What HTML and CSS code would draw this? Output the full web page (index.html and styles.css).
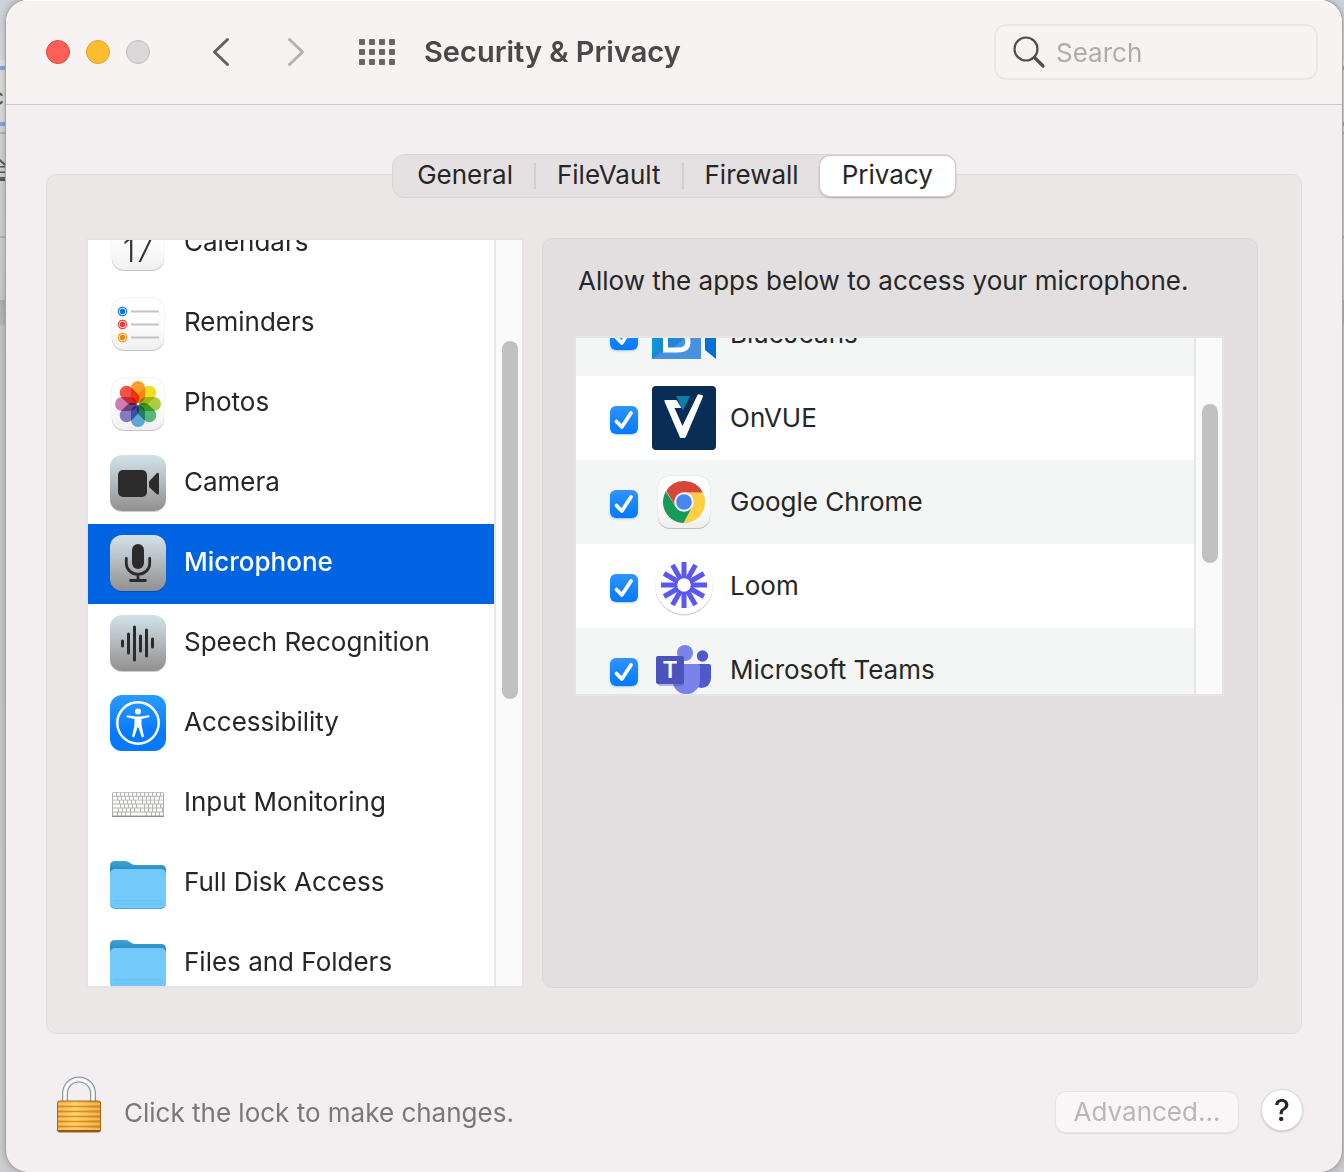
FILE: index.html
```html
<!DOCTYPE html>
<html lang="en">
<head>
  <meta charset="UTF-8">
  <meta name="viewport" content="width=device-width, initial-scale=1.0">
  <title>Security &amp; Privacy</title>
  <link rel="stylesheet" href="styles.css">
</head>
<body>
  <!-- Page behind the window -->
  <div class="behind" aria-hidden="true">
    <span class="behind-text">cl</span>
    <span class="behind-text behind-link">全</span>
  </div>

  <div class="window">
    <!-- Toolbar -->
    <header class="toolbar">
      <div class="lights">
        <button class="light light-close" aria-label="Close"></button>
        <button class="light light-min" aria-label="Minimize"></button>
        <button class="light" aria-label="Zoom" disabled></button>
      </div>
      <div class="nav-buttons">
        <button class="icon-button" aria-label="Back">
          <svg width="18" height="30" viewBox="0 0 18 30"><path d="M15.500 2.500 2.500 15l13 12.500" fill="none" stroke="#636061" stroke-width="3" stroke-linecap="round" stroke-linejoin="round"/></svg>
        </button>
        <button class="icon-button" aria-label="Forward" disabled>
          <svg width="18" height="30" viewBox="0 0 18 30"><path d="M2.500 2.500 15.500 15l-13 12.500" fill="none" stroke="#b5b1b2" stroke-width="3" stroke-linecap="round" stroke-linejoin="round"/></svg>
        </button>
      </div>
      <button class="icon-button" aria-label="Show All">
        <svg width="36" height="26" viewBox="0 0 36 26" fill="#696667">
          <rect x="0" y="0" width="6" height="6" rx="1"/><rect x="10" y="0" width="6" height="6" rx="1"/><rect x="20" y="0" width="6" height="6" rx="1"/><rect x="30" y="0" width="6" height="6" rx="1"/>
          <rect x="0" y="10" width="6" height="6" rx="1"/><rect x="10" y="10" width="6" height="6" rx="1"/><rect x="20" y="10" width="6" height="6" rx="1"/><rect x="30" y="10" width="6" height="6" rx="1"/>
          <rect x="0" y="20" width="6" height="6" rx="1"/><rect x="10" y="20" width="6" height="6" rx="1"/><rect x="20" y="20" width="6" height="6" rx="1"/><rect x="30" y="20" width="6" height="6" rx="1"/>
        </svg>
      </button>
      <h1>Security &amp; Privacy</h1>
      <label class="search">
        <svg width="34" height="34" viewBox="0 0 34 34" fill="none" stroke="#504d4e" stroke-linecap="round"><circle cx="14" cy="14" r="11.500" stroke-width="2.200"/><path d="M22.500 22.500 31 31" stroke-width="3.200"/></svg>
        <input type="search" placeholder="Search" aria-label="Search">
      </label>
    </header>

    <main>
      <!-- Tabs -->
      <nav class="tabs">
        <button>General</button>
        <button>FileVault</button>
        <button>Firewall</button>
        <button class="active">Privacy</button>
      </nav>

      <div class="panel">
        <!-- Services -->
        <div class="scroller services">
          <ul>
            <li><a href="#">
              <svg width="56" height="56" viewBox="0 -1 56 56"><use href="#tile"/><text x="28" y="46" class="cal-day">17</text></svg>
              Calendars
            </a></li>
            <li><a href="#">
              <svg width="56" height="56" viewBox="0 -1 56 56"><use href="#tile"/>
                <g stroke="#c2c3c8" stroke-width="1.800"><path d="M21 15.500h28M21 28.500h28M21 41.500h28"/></g>
                <g fill="#fff" stroke-width="1.200"><circle cx="12.500" cy="15.500" r="4.200" stroke="#1a7df0"/><circle cx="12.500" cy="28.500" r="4.200" stroke="#f0443e"/><circle cx="12.500" cy="41.500" r="4.200" stroke="#eb9a1c"/></g>
                <circle cx="12.500" cy="15.500" r="2.800" fill="#0b72ea"/><circle cx="12.500" cy="28.500" r="2.800" fill="#ee3a34"/><circle cx="12.500" cy="41.500" r="2.800" fill="#e28c0c"/>
              </svg>
              Reminders
            </a></li>
            <li><a href="#">
              <svg width="56" height="56" viewBox="0 -1 56 56"><use href="#tile"/>
                <g class="petals" transform="translate(28 28)">
                  <rect x="-7" y="-23" width="14" height="22" rx="7" fill="#fb9a1e"/>
                  <rect x="-7" y="-23" width="14" height="22" rx="7" fill="#f4dc16" transform="rotate(45)"/>
                  <rect x="-7" y="-23" width="14" height="22" rx="7" fill="#a6ce39" transform="rotate(90)"/>
                  <rect x="-7" y="-23" width="14" height="22" rx="7" fill="#4fba74" transform="rotate(135)"/>
                  <rect x="-7" y="-23" width="14" height="22" rx="7" fill="#5aa9e0" transform="rotate(180)"/>
                  <rect x="-7" y="-23" width="14" height="22" rx="7" fill="#8377c0" transform="rotate(225)"/>
                  <rect x="-7" y="-23" width="14" height="22" rx="7" fill="#cf78b2" transform="rotate(270)"/>
                  <rect x="-7" y="-23" width="14" height="22" rx="7" fill="#f8463c" transform="rotate(315)"/>
                </g>
              </svg>
              Photos
            </a></li>
            <li><a href="#">
              <svg width="56" height="56" viewBox="0 0 56 56"><use href="#gray-tile"/>
                <rect x="8" y="15" width="29" height="27" rx="5" fill="#2b2b2b"/><path d="M39 26.500 46.500 18.500Q49 16.500 49 19.500V38Q49 41 46.500 39L39 32Z" fill="#2b2b2b"/>
              </svg>
              Camera
            </a></li>
            <li class="selected"><a href="#">
              <svg width="56" height="56" viewBox="0 0 56 56"><use href="#gray-tile"/>
                <rect x="22" y="9" width="12" height="25" rx="6" fill="#2b2b2b"/><path d="M16.300 23.500v5a11.700 10.800 0 0 0 23.400 0v-5M28 40v5M20.500 45.500h15" fill="none" stroke="#2b2b2b" stroke-width="2.800" stroke-linecap="round"/>
              </svg>
              Microphone
            </a></li>
            <li><a href="#">
              <svg width="56" height="56" viewBox="0 0 56 56"><use href="#gray-tile"/>
                <path d="M12.500 26v5M18.500 19v19M24.500 12v33M30.500 21v15M36.500 15v26M42.500 24v8" stroke="#2b2b2b" stroke-width="3" stroke-linecap="round"/>
              </svg>
              Speech Recognition
            </a></li>
            <li><a href="#">
              <svg width="56" height="56" viewBox="0 0 56 56"><rect width="56" height="56" rx="12" fill="url(#blue)"/>
                <circle cx="28" cy="28" r="20.700" fill="none" stroke="#fff" stroke-width="2.500"/><circle cx="28" cy="16.500" r="3" fill="#fff"/>
                <path d="M17 20.200 25.500 21.500h5L39 20.200q1.200 1.400 0 2L31.500 24v6l2.500 11.500q-1.300 1.300-2.400.2L28.500 32.500h-1L24.400 41.700q-1.100 1.100-2.400-.2L24.500 30v-6L17 22.200q-1.200-.6 0-2Z" fill="#fff"/>
              </svg>
              Accessibility
            </a></li>
            <li><a href="#">
              <svg width="56" height="56" viewBox="0 -1 56 56">
                <rect x="2" y="16" width="52" height="25" rx="1.500" fill="#b2b2b0"/><rect x="2" y="39.500" width="52" height="1.500" fill="#8f8f8f"/>
                <g stroke="#fafafa" stroke-width="3">
                  <path d="M3 18.300h50" stroke-dasharray="3 1"/>
                  <path d="M3 22.200h50" stroke-dasharray="4 1 3 1 3 1 3 1 3 1"/>
                  <path d="M3 26.100h50" stroke-dasharray="6 1 3 1 3 1 3 1 3 1"/>
                  <path d="M3 30h50" stroke-dasharray="7 1 3 1 3 1 3 1 3 1"/>
                  <path d="M3 34h50" stroke-dasharray="5 1 3 1 3 1 3 1 3 1"/>
                  <path d="M3 37.900h50" stroke-dasharray="4 1 3 1 3 1 4 1 15 1 4 1 3 1 3 1 3 1"/>
                </g>
              </svg>
              Input Monitoring
            </a></li>
            <li><a href="#">
              <svg width="56" height="56" viewBox="0 -1 56 56"><use href="#folder"/></svg>
              Full Disk Access
            </a></li>
            <li><a href="#">
              <svg width="56" height="56" viewBox="0 0 56 56"><use href="#folder"/></svg>
              Files and Folders
            </a></li>
          </ul>
          <div class="scrollbar"><div class="thumb"></div></div>
        </div>

        <!-- Apps -->
        <section class="pane">
          <p>Allow the apps below to access your microphone.</p>
          <div class="scroller apps">
            <ul>
              <li><label>
                <input type="checkbox" checked>
                <svg width="64" height="64" viewBox="0 0 64 64">
                  <path d="M0 8h49v49H0Z" fill="#1688dc"/><path d="M0 57 14 43V8H0Z" fill="#0799da"/><path d="M0 57 49 22v35Z" fill="#4692de"/><path d="M0 57 11 46h10L49 22V8H18Z" fill="#2185d8"/>
                  <path d="M53 30 64 20v37L53 48Z" fill="#0571d3"/>
                  <path d="M13.500 18H25q9 0 9 7 0 5-5 6.500 7 1.500 7 8 0 8.500-10 8.500H13.500Z" fill="none" stroke="#fff" stroke-width="5"/><path d="M14 31.500h15" stroke="#fff" stroke-width="5"/>
                </svg>
                BlueJeans
              </label></li>
              <li><label>
                <input type="checkbox" checked>
                <svg width="64" height="64" viewBox="0 0 64 64">
                  <rect width="64" height="64" rx="4" fill="#0a2d56"/><path d="M24 10h14L31 24.500Z" fill="#0a7fa8"/>
                  <path d="M13 14h11.500L29.500 22H22.500L30.500 40 45.500 9q.5-1 2-.5l2.500.5q1.500.5.8 2L34 50.500q-.8 1.500-2 1.500h-3q-1 0-1.500-1.500L12.500 15.500Q12 14 13 14Z" fill="#fff"/>
                </svg>
                OnVUE
              </label></li>
              <li><label>
                <input type="checkbox" checked>
                <svg width="64" height="64" viewBox="0 0 64 64">
                  <use href="#tile" x="4" y="4"/>
                  <path d="M32 22.500H50.800A21 21 0 0 1 31.500 53L40.200 36.800Z" fill="#fdcf42"/>
                  <path d="M23.800 36.800 13.820 21.500A21 21 0 0 0 31.500 53L40.200 36.800Z" fill="#159b57"/>
                  <path d="M23.800 36.800 14.200 21A21 21 0 0 1 50.800 22.500H32Z" fill="#d8463a"/>
                  <circle cx="32" cy="32" r="9.800" fill="#f4f4f4"/><circle cx="32" cy="32" r="7.800" fill="#4a86f0"/>
                </svg>
                Google Chrome
              </label></li>
              <li><label>
                <input type="checkbox" checked>
                <svg width="64" height="64" viewBox="0 0 64 64">
                  <circle cx="32" cy="32" r="29.500" fill="#f2f2f2"/><circle cx="32" cy="33" r="28.500" fill="#d3d3d3"/><circle cx="32" cy="31.500" r="28.800" fill="#fff"/>
                  <g stroke="#5b57f2" stroke-width="5">
                    <path d="M32 8v46M9 31h46"/>
                    <path d="M32 8v46M9 31h46" transform="rotate(30 32 31)"/>
                    <path d="M32 8v46M9 31h46" transform="rotate(60 32 31)"/>
                  </g>
                  <circle cx="32" cy="31" r="9" fill="#5b57f2"/><circle cx="32" cy="31" r="6.800" fill="#fff"/>
                </svg>
                Loom
              </label></li>
              <li><label>
                <input type="checkbox" checked>
                <svg width="64" height="64" viewBox="0 0 64 64">
                  <circle cx="50.500" cy="18" r="5.700" fill="#5059c9"/><path d="M40 26h17q2 0 2 2v12.500a9.500 9.500 0 0 1-19 0Z" fill="#5059c9"/>
                  <circle cx="33" cy="15" r="8" fill="#7b83eb"/><path d="M20 26h26q2 0 2 2v14.500a13.700 13.700 0 0 1-27.400 0Z" fill="#7b83eb"/>
                  <rect x="6" y="20" width="26" height="28" rx="2" fill="#3a419e" opacity=".35"/><rect x="4" y="18" width="28" height="28" rx="2" fill="#4b53bc"/>
                  <text x="18" y="40" class="teams-letter">T</text>
                </svg>
                Microsoft Teams
              </label></li>
            </ul>
            <div class="scrollbar"><div class="thumb"></div></div>
          </div>
        </section>
      </div>
    </main>

    <!-- Bottom bar -->
    <footer>
      <svg width="46" height="58" viewBox="0 0 46 58">
        <path d="M9 28V17.500a14 14 0 0 1 28 0V28" fill="none" stroke="#8b949b" stroke-width="6"/>
        <path d="M9 28V17.500a14 14 0 0 1 28 0V28" fill="none" stroke="#dfe6ea" stroke-width="4"/>
        <path d="M9 27V17.500a14 14 0 0 1 28 0V27" fill="none" stroke="#fff" stroke-width="1.500"/>
        <rect x="1.500" y="25" width="43" height="31" rx="2" fill="url(#gold)" stroke="#a8661c"/>
        <path d="M2 30.500h42M2 35.500h42M2 40.500h42M2 45.500h42M2 50.500h42" stroke="#d88b22"/>
        <path d="M2 28h42M2 33h42M2 38h42M2 43h42M2 48h42M2 53h42" stroke="#ffdc87"/>
        <path d="M2 55h42" stroke="#9c5415" stroke-width="2"/>
      </svg>
      <span class="lock-text">Click the lock to make changes.</span>
      <button class="advanced" disabled>Advanced...</button>
      <button class="help">?</button>
    </footer>
  </div>

  <!-- Shared shapes -->
  <svg class="defs" aria-hidden="true">
    <defs>
      <linearGradient id="white" x2="0" y2="1"><stop offset="0" stop-color="#fff"/><stop offset=".5" stop-color="#fdfdfd"/><stop offset="1" stop-color="#f1f0ef"/></linearGradient>
      <linearGradient id="gray" x2="0" y2="1"><stop offset="0" stop-color="#d3e3ea"/><stop offset="1" stop-color="#929090"/></linearGradient>
      <linearGradient id="blue" x2="0" y2="1"><stop offset="0" stop-color="#2b9bff"/><stop offset=".7" stop-color="#0579ff"/><stop offset="1" stop-color="#0579ff"/></linearGradient>
      <linearGradient id="gold"><stop offset="0" stop-color="#e99c31"/><stop offset=".4" stop-color="#fdc65c"/><stop offset="1" stop-color="#dd8c27"/></linearGradient>
      <linearGradient id="folder-back" x2="0" y2="1"><stop offset="0" stop-color="#3fa2d8"/><stop offset="1" stop-color="#1a80bb"/></linearGradient>
      <g id="tile">
        <rect x="2" y="3" width="52" height="52" rx="12" fill="#000" opacity=".2"/>
        <rect x="1.500" y="1.500" width="53" height="53" rx="12" fill="#000" opacity=".07"/>
        <rect x="2" y="2" width="52" height="52" rx="12" fill="url(#white)"/>
      </g>
      <g id="gray-tile">
        <rect x="0" y="1" width="56" height="56" rx="12" fill="#000" opacity=".2"/>
        <rect width="56" height="56" rx="12" fill="url(#gray)"/>
      </g>
      <g id="folder">
        <path d="M0 20V10q0-5 5-5h10q3 0 5 2t6 2h25q5 0 5 5v6Z" fill="url(#folder-back)"/>
        <rect x="0" y="13.500" width="56" height="39.500" rx="5" fill="#4ea5d6"/>
        <rect x="0" y="13" width="56" height="39" rx="5" fill="#73cafa"/>
        <path d="M3 45h50M3 48h50" stroke="#66bdf0"/>
      </g>
    </defs>
  </svg>
</body>
</html>
```
FILE: styles.css
```css
* {
  margin: 0;
  padding: 0;
  box-sizing: border-box;
}

body {
  font-family: Inter, "Liberation Sans", sans-serif;
  font-size: 26px;
  color: #262626;
  height: 100vh;
  min-height: 800px;
  padding: 0 2px 0 6px;
  position: relative;
  background: linear-gradient(
    #cfd2d9 0, #d9dade 60px, #e2e3e6 60px, #e2e3e6 66px,
    #8ba4dc 66px, #8ba4dc 70px, #dcdcdc 70px, #dcdcdc 122px,
    #8ba4dc 122px, #8ba4dc 126px, #d6d6d6 126px, #d6d6d6 132px,
    #b4b4b6 132px, #b4b4b6 134px, #d4d4d4 134px, #cfcfcf 236px,
    #b4b4b8 236px, #b4b4b8 238px, #cfcfcf 238px, #cccccc 300px,
    #b2b2b4 300px, #bababc 324px, #c8c8ca 326px, #cdcdd0 100%);
}

button, input {
  font: inherit;
  color: inherit;
  border: none;
  background: none;
}

ul {
  list-style: none;
}

svg {
  display: block;
  flex: none;
}

.defs {
  position: absolute;
  width: 0;
  height: 0;
}

/* Page behind the window */
.behind {
  position: absolute;
  left: 0;
  top: 82px;
  width: 10px;
  display: flex;
  flex-direction: column;
  align-items: flex-end;
  gap: 40px;
  font-size: 24px;
  line-height: 30px;
  color: #55565a;
}

.behind-link {
  font-family: "Noto Sans CJK SC", sans-serif;
  text-decoration: underline;
}

/* Window */
.window {
  position: relative;
  height: 100%;
  display: flex;
  flex-direction: column;
  background-color: #f3eff0;
  border-radius: 22px;
  box-shadow: 0 0 0 1px #a5a4a6, 0 0 8px rgba(0, 0, 0, 0.3);
  overflow: hidden;
}

/* Toolbar */
.toolbar {
  flex: none;
  height: 105px;
  display: flex;
  align-items: center;
  padding: 0 24px 2px 40px;
  background-color: #f8f3f3;
  border-top: 1px solid #fff;
  border-bottom: 1px solid #cbc7c7;
}

.lights {
  display: flex;
  gap: 16px;
}

.light {
  width: 24px;
  height: 24px;
  border-radius: 50%;
  background-color: #dcd8d9;
  border: 1px solid #c1bdbe;
}

.light-close {
  background-color: #ff5f57;
  border-color: #e2463f;
}

.light-min {
  background-color: #febc2e;
  border-color: #e0a028;
}

.nav-buttons {
  display: flex;
  gap: 57px;
  margin: 0 54px 0 62px;
}

.toolbar h1 {
  margin-left: 29px;
  font-size: 29px;
  font-weight: 600;
  color: #4a4849;
}

.search {
  margin-left: auto;
  width: 324px;
  height: 56px;
  display: flex;
  align-items: center;
  gap: 10px;
  padding: 0 16px;
  border: 2px solid #eae6e6;
  border-radius: 12px;
}

.search input {
  width: 100%;
  padding-top: 2px;
  outline: none;
}

.search input::placeholder {
  color: #b0acad;
}

/* Tabs */
main {
  flex: 1;
  min-height: 0;
  display: flex;
  flex-direction: column;
  padding: 49px 40px 0;
}

.tabs {
  position: relative;
  z-index: 1;
  flex: none;
  align-self: center;
  display: flex;
  align-items: center;
  height: 44px;
  margin-bottom: -24px;
  background-color: #e5e1e2;
  border: 1px solid #dad6d7;
  border-radius: 12px;
}

.tabs button {
  height: 26px;
  line-height: 24px;
  padding: 0 21px 2px;
  border-left: 2px solid #d2cecf;
}

.tabs button:first-child {
  padding-left: 24px;
  border-left: none;
}

.tabs .active {
  height: 40px;
  padding: 0 22px 2px;
  border-left: none;
  border-radius: 10px;
  background-color: #fff;
  box-shadow: 0 0 0 1px #d0cccd, 0 1px 3px rgba(0, 0, 0, 0.4);
}

/* Panel */
.panel {
  flex: 1;
  min-height: 0;
  display: flex;
  gap: 18px;
  padding: 63px 43px 45px 39px;
  background-color: #ebe7e7;
  border: 1px solid #e0dcdc;
  border-radius: 10px;
}

.scroller {
  display: flex;
  overflow: hidden;
  background-color: #fff;
  border: 2px solid #e5e4e5;
}

.scroller ul {
  flex: 1;
}

.scrollbar {
  width: 28px;
  padding: 0 4px;
  background-color: #fafafa;
  border-left: 2px solid #e7e7e7;
}

.thumb {
  width: 16px;
  margin-left: 2px;
  border-radius: 8px;
  background-color: #c1c1c1;
}

/* Services */
.services {
  flex: 0 0 438px;
}

.services ul {
  margin-top: -36px;
}

.services a {
  display: flex;
  align-items: center;
  gap: 18px;
  height: 80px;
  padding: 0 22px 6px;
  color: inherit;
  text-decoration: none;
}

.services svg {
  margin-top: 4px;
  overflow: visible;
}

.services .selected {
  background-color: #0063e1;
  color: #fff;
  font-weight: 500;
}

.services .thumb {
  height: 358px;
  margin-top: 101px;
}

.cal-day {
  font-size: 32px;
  font-weight: 300;
  text-anchor: middle;
  fill: #333;
}

.petals rect {
  mix-blend-mode: multiply;
  opacity: 0.95;
}

/* Apps */
.pane {
  flex: 1;
  padding: 23px 33px 0 31px;
  background-color: #e3dfe0;
  border: 1px solid #d9d5d6;
  border-radius: 10px;
}

.pane p {
  padding-left: 4px;
  margin-bottom: 36px;
  line-height: 38px;
}

.apps {
  height: 360px;
}

.apps ul {
  margin-top: -46px;
}

.apps li:nth-child(odd) {
  background-color: #f4f5f5;
}

.apps label {
  display: flex;
  align-items: center;
  gap: 14px;
  height: 84px;
  padding: 0 0 2px 34px;
}

.apps svg {
  margin-top: 2px;
}

.apps input {
  appearance: none;
  flex: none;
  width: 28px;
  height: 28px;
  margin-top: 6px;
  border-radius: 6px;
  box-shadow: 0 1px 2px rgba(0, 80, 200, 0.3);
}

.apps input:checked {
  background: url("data:image/svg+xml,%3Csvg xmlns='http://www.w3.org/2000/svg' viewBox='0 0 28 28'%3E%3Cpath d='M6.500 15.500 11.800 21 21 7' fill='none' stroke='%23fff' stroke-width='3.800' stroke-linecap='round' stroke-linejoin='round'/%3E%3C/svg%3E"), linear-gradient(#2f93ff, #027aff);
}

.apps .thumb {
  height: 159px;
  margin-top: 66px;
}

.teams-letter {
  font-size: 23px;
  font-weight: 600;
  text-anchor: middle;
  fill: #fff;
}

/* Bottom bar */
footer {
  flex: none;
  display: flex;
  align-items: center;
  height: 138px;
  padding: 4px 40px 0 50px;
}

.lock-text {
  margin: 14px auto 0 22px;
  color: #7a7778;
}

.advanced {
  width: 182px;
  height: 40px;
  margin: 14px 24px 0 0;
  padding-bottom: 2px;
  border-radius: 10px;
  background-color: #f9f6f7;
  color: #b9b6b7;
  box-shadow: 0 0 0 1px #e8e4e5, 0 1px 2px rgba(0, 0, 0, 0.25);
}

.help {
  width: 40px;
  height: 40px;
  margin-top: 10px;
  border-radius: 50%;
  background-color: #fff;
  font-size: 30px;
  font-weight: 500;
  line-height: 40px;
  box-shadow: 0 0 0 1px #dedadb, 0 1px 3px rgba(0, 0, 0, 0.35);
}
```
